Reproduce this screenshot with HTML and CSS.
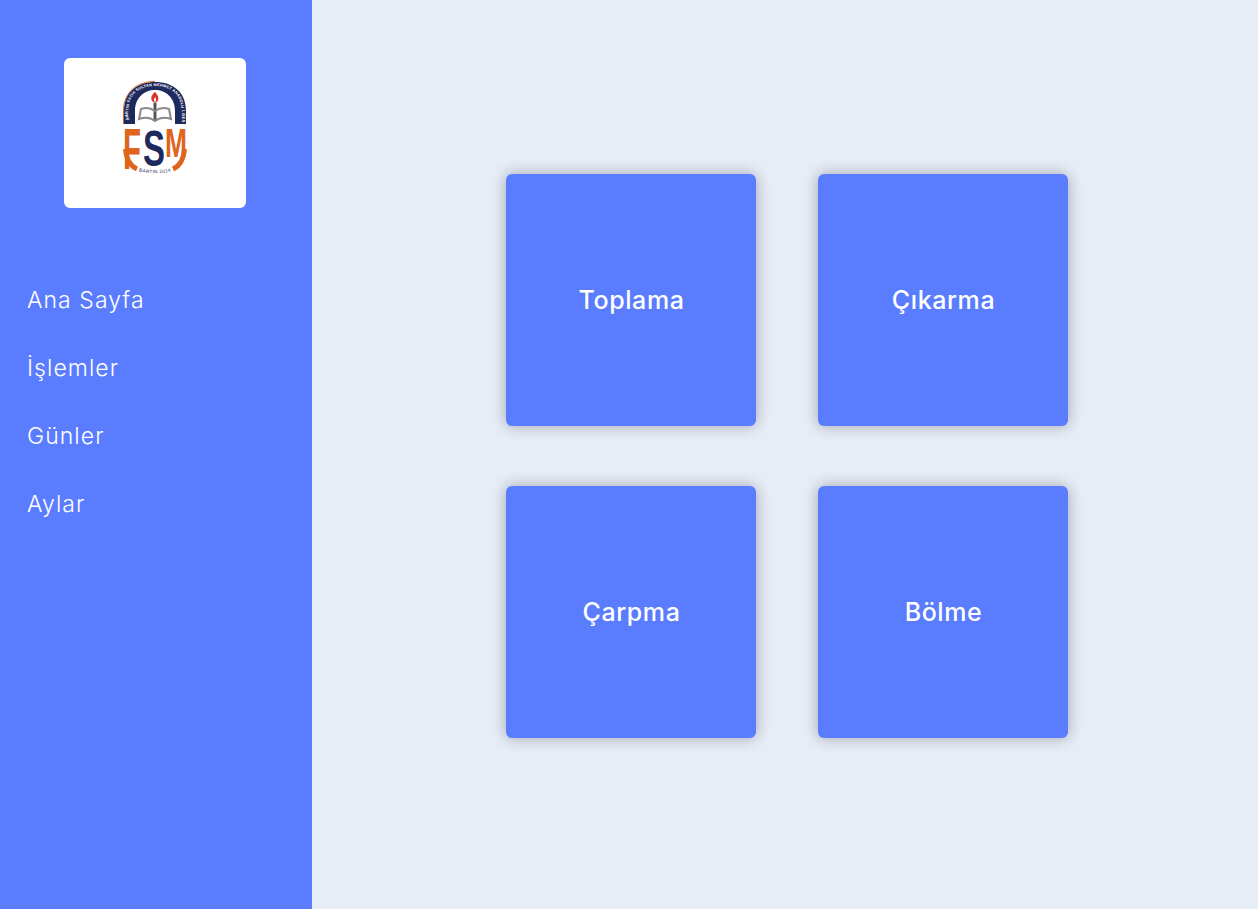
FILE: index.html
```html
<!DOCTYPE html>
<html lang="tr">
<head>
<meta charset="utf-8">
<title>Matematik</title>
<link rel="stylesheet" href="styles.css">
</head>
<body>
<div class="layout">
  <aside class="sidebar">
    <div class="logo-card">
      <svg class="logo" viewBox="0 0 64 96" width="64" height="96" aria-label="FSM logo">
        <defs>
          <path id="band" d="M5.500 42V30C5.500 13 17 5 32 5S58.500 13 58.500 30V42"/>
          <path id="city" d="M15 90C24 93 40 93 49 90"/>
        </defs>
        <path d="M1 43V30C1 11 14 1 32 1S63 11 63 30V43H52V30C52 17 43 9 32 9S12 17 12 30V43Z" fill="#1c2a5e"/>
        <path d="M.5 43V30C.5 11 14 .5 32 .5" fill="none" stroke="#e0641c" stroke-width="1"/>
        <text class="logo-band"><textPath href="#band" textLength="104" startOffset="3">BARTIN FATİH SULTAN MEHMET ANADOLU LİSESİ</textPath></text>
        <path d="M32 11C27 15 27 20 32 22C37 20 36 15 32 11Z" fill="#d8342a"/>
        <path d="M32 16C30.500 18 30.500 20 32 21C33.500 20 33.500 18 32 16Z" fill="#fff"/>
        <rect x="30.500" y="22" width="3" height="18" fill="#555"/>
        <path d="M18 28C23 26 28 27 32 30C36 27 41 26 46 28L48 38C42 36 36 37 32 40C28 37 22 36 16 38Z" fill="none" stroke="#8a8a8a" stroke-width="2"/>
        <path d="M2.500 68C3 77 7 85 14 88" fill="none" stroke="#e0641c" stroke-width="5"/>
        <path d="M61.500 68C61 77 57 85 50 88" fill="none" stroke="#e0641c" stroke-width="5"/>
        <text class="logo-f" x="0" y="88" textLength="18" lengthAdjust="spacingAndGlyphs">F</text>
        <text class="logo-s" x="20" y="85" textLength="22" lengthAdjust="spacingAndGlyphs">S</text>
        <text class="logo-m" x="42" y="76" textLength="22" lengthAdjust="spacingAndGlyphs">M</text>
        <text class="logo-city"><textPath href="#city" textLength="32" startOffset="1">BARTIN 2014</textPath></text>
      </svg>
    </div>
    <nav class="menu">
      <a class="menu-item">Ana Sayfa</a>
      <a class="menu-item">İşlemler</a>
      <a class="menu-item">Günler</a>
      <a class="menu-item">Aylar</a>
    </nav>
  </aside>
  <main class="content">
    <div class="grid">
      <a class="tile">Toplama</a>
      <a class="tile">Çıkarma</a>
      <a class="tile">Çarpma</a>
      <a class="tile">Bölme</a>
    </div>
  </main>
</div>
</body>
</html>
```
FILE: styles.css
```css
* { box-sizing: border-box; }
html, body { margin: 0; height: 100%; }
body { font-family: Inter, "Open Sans", sans-serif; background: #e6edf7; color: #fff; overflow: hidden; }
.layout { display: flex; height: 909px; }
.sidebar { width: 312px; flex: none; background: #5a7cff; padding-top: 58px; display: flex; flex-direction: column; }
.logo-card { width: 182px; height: 150px; margin: 0 auto 0 64px; background: #fff; border-radius: 6px; display: flex; justify-content: center; padding-top: 23px; }
.logo { display: block; overflow: visible; }
.logo-band { font: 700 3.800px "Liberation Sans", sans-serif; fill: #fff; }
.logo-f { font: 700 57px "Liberation Sans", sans-serif; fill: #e0641c; }
.logo-m { font: 700 41px "Liberation Sans", sans-serif; fill: #e0641c; }
.logo-s { font: 700 50px "Liberation Sans", sans-serif; fill: #1c2a5e; }
.logo-city { font: 400 4.600px "Liberation Sans", sans-serif; fill: #1c2a5e; }
.menu { display: flex; flex-direction: column; gap: 40px; padding: 78px 0 0 27px; }
.menu-item { font-size: 23px; line-height: 28px; font-weight: 350; letter-spacing: 1.050px; color: #fff; }
.content { flex: 1; padding: 174px 0 0 194px; }
.grid { display: grid; grid-template-columns: 250px 250px; grid-auto-rows: 252px; column-gap: 62px; row-gap: 60px; }
.tile { display: flex; align-items: center; justify-content: center; padding-bottom: 1px; padding-left: 1px; background: #5a7cff; border-radius: 6px; box-shadow: 0 0 15px rgba(0, 0, 0, 0.3); font-size: 25px; font-weight: 450; letter-spacing: 0.6px; color: #fff; }
```
